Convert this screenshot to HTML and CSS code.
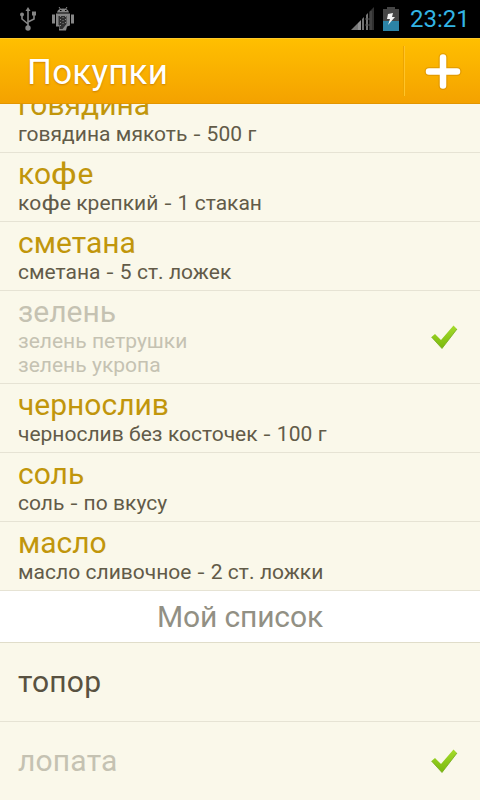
FILE: index.html
```html
<!DOCTYPE html>
<html lang="ru">
<head>
<meta charset="utf-8">
<title>Покупки</title>
<link rel="stylesheet" href="styles.css">
</head>
<body>
<div class="screen">
  <header class="status">
    <svg class="usb" width="18" height="26" viewBox="0 0 18 26" fill="none" stroke="#858585" stroke-width="1.6">
      <path d="M9 4v17M3 8v5l6 5M15 9v4l-6 3"/>
      <path d="M9 1l2.5 4h-5z" fill="#858585" stroke="none"/>
      <circle cx="9" cy="22" r="2.7" fill="#858585" stroke="none"/>
      <circle cx="3" cy="8.5" r="2" fill="#858585" stroke="none"/>
      <path d="M13 5.500h4v4h-4z" fill="#858585" stroke="none"/>
    </svg>
    <svg class="droid" width="24" height="26" viewBox="0 0 24 26" fill="#858585">
      <path d="M6 6.500C6.500 3.800 8.500 2.500 12 2.500s5.500 1.300 6 4zM1 8.500h3v9H1zM20 8.500h3v9h-3zM5 7.500h14v12l-3 1-1 4H8v-4H5z"/>
      <path d="M8 1l2 3M16 1l-2 3" stroke="#858585"/>
      <path d="M9 4.500h1.500M14 4.500h1.500" stroke="#000"/>
      <path d="M7.500 10h8v8l-4 5H8.500v-4h-1z" fill="#303030"/>
      <path d="M9.500 10v11M12 11v9M14.500 10v7" stroke="#858585" stroke-dasharray="1 2"/>
    </svg>
    <svg class="signal" width="24" height="24" viewBox="0 0 24 24">
      <path d="M0 23L7 16v7z" fill="#777"/>
      <path d="M7 16l3-3v10H7z" fill="#909090"/>
      <path d="M11 12l2-2v13h-2zM15 8l2-2v17h-2z" fill="#747474"/>
      <path d="M18 5l5-5v23h-5z" fill="#303030"/>
      <path d="M14 12h5M14 18h5M20 4v19" stroke="#555"/>
    </svg>
    <svg class="battery" width="16" height="24" viewBox="0 0 16 24">
      <path d="M4 0h8v2h4v12H0V2h4z" fill="#454545"/>
      <path d="M0 14h16v10H0z" fill="#2c83a6"/>
      <path d="M5 7l5-1-1 4h3l-7 8 2-6H4z" fill="#f4f4f4"/>
    </svg>
    <span class="clock">23:21</span>
  </header>
  <div class="bar">
    <h1>Покупки</h1>
    <div class="add">
      <svg width="42" height="42" viewBox="0 0 42 42" stroke-linecap="round">
        <path d="M21 7.500v28M7 21.500h28" stroke="#c98500" stroke-opacity=".45" stroke-width="9"/>
        <path d="M21 7.500v28M7 21.500h28" stroke="#fff" stroke-width="6.500"/>
      </svg>
    </div>
  </div>
  <main class="list">
    <div class="item first"><h2>говядина</h2><p>говядина мякоть <span class="dash">-</span> 500 г</p></div>
    <div class="item"><h2>ко<span class="ef">ф</span>е</h2><p>ко<span class="ef">ф</span>е крепкий <span class="dash">-</span> 1 стакан</p></div>
    <div class="item"><h2>сметана</h2><p>сметана <span class="dash">-</span> 5 ст. ложек</p></div>
    <div class="item done">
      <div><h2>зелень</h2><p>зелень петрушки</p><p>зелень укропа</p></div>
      <svg class="check" width="28" height="26" viewBox="0 0 28 26"><use href="#tick"/></svg>
    </div>
    <div class="item"><h2>чернослив</h2><p>чернослив без косточек <span class="dash">-</span> 100 г</p></div>
    <div class="item"><h2>соль</h2><p>соль <span class="dash">-</span> по вкусу</p></div>
    <div class="item"><h2>масло</h2><p>масло сливочное <span class="dash">-</span> 2 ст. ложки</p></div>
    <div class="section">Мой список</div>
    <div class="item own"><h2>топор</h2></div>
    <div class="item own done">
      <h2>лопата</h2>
      <svg class="check" width="28" height="26" viewBox="0 0 28 26">
        <defs>
          <linearGradient id="green" x1="0" y1="0" x2="0" y2="1"><stop stop-color="#a5dc2c"/><stop offset="1" stop-color="#79b80c"/></linearGradient>
          <g id="tick">
            <path d="M1.500 13L5 10l6 6L23.500 1.500 27 5 12 24.500z" fill="url(#green)"/>
            <path d="M1.500 13L12 24.500 27 5" fill="none" stroke="#73a91a" stroke-width=".8"/>
          </g>
        </defs>
        <use href="#tick"/>
      </svg>
    </div>
  </main>
</div>
</body>
</html>
```
FILE: styles.css
```css
* { box-sizing: border-box; }
body { margin: 0; font-family: Roboto, sans-serif; }
h1, h2, p { margin: 0; font-weight: 400; white-space: nowrap; }
svg { display: block; flex: none; }

.screen {
  width: 480px;
  height: 800px;
  display: flex;
  flex-direction: column;
  overflow: hidden;
  background: #faf8ea;
}

.status {
  flex: none;
  height: 38px;
  display: flex;
  align-items: center;
  padding: 0 11px 0 19px;
  background: #000;
}
.droid { margin-left: 14px; }
.signal { margin: 0 8px 0 auto; }
.clock {
  width: 59px;
  margin-left: 11px;
  color: #33b5e5;
  font-size: 24px;
  line-height: 40px;
  white-space: nowrap;
}

.bar {
  flex: none;
  height: 66px;
  display: flex;
  align-items: center;
  border-top: 1px solid #ffc928;
  border-bottom: 1px solid #e39600;
  background: linear-gradient(#ffbf00, #f4a200);
}
.bar h1 {
  flex: 1;
  padding: 3px 0 0 27px;
  color: #fff;
  font-size: 35px;
  letter-spacing: .2px;
  line-height: 64px;
  text-shadow: 0 1px 2px rgba(180, 105, 0, .65);
}
.add {
  width: 76px;
  height: 50px;
  display: flex;
  align-items: center;
  justify-content: center;
  border-left: 1px solid #ffc428;
  box-shadow: -1px 0 #eda500;
}

.list {
  flex: 1;
  min-height: 0;
  overflow: hidden;
}
.item {
  height: 69px;
  padding: 3px 18px 0;
  border-bottom: 1px solid #e6e3d4;
  background: #faf8ea;
}
.item.first { margin-top: -20px; }
.item h2 {
  color: #c1960c;
  font-size: 30px;
  line-height: 35px;
}
.item p {
  color: #625b48;
  font-size: 21px;
  line-height: 24px;
  word-spacing: .2px;
}
.dash {
  display: inline-block;
  margin: 0 1.3px;
  transform: scaleX(1.2);
}
.ef {
  display: inline-block;
  margin: 0 .08em;
  transform: scaleX(1.2);
}
.item.done {
  height: 93px;
  display: flex;
  align-items: center;
  justify-content: space-between;
  padding-top: 0;
  padding-right: 22px;
}
.item.done > div { padding-bottom: 4px; }
.item.done h2, .item.done p { color: #c5c2b2; }
.item.own, .item.own.done {
  height: 79px;
  display: flex;
  align-items: center;
  padding-top: 0;
}
.item.own h2 {
  padding-bottom: 2px;
  color: #595241;
  letter-spacing: .2px;
}
.item.own.done h2 { color: #c5c2b2; }

.section {
  height: 52px;
  border-bottom: 1px solid #e0ddca;
  background: #fff;
  color: #929084;
  font-size: 30px;
  letter-spacing: -.15px;
  line-height: 51px;
  text-align: center;
}
```
